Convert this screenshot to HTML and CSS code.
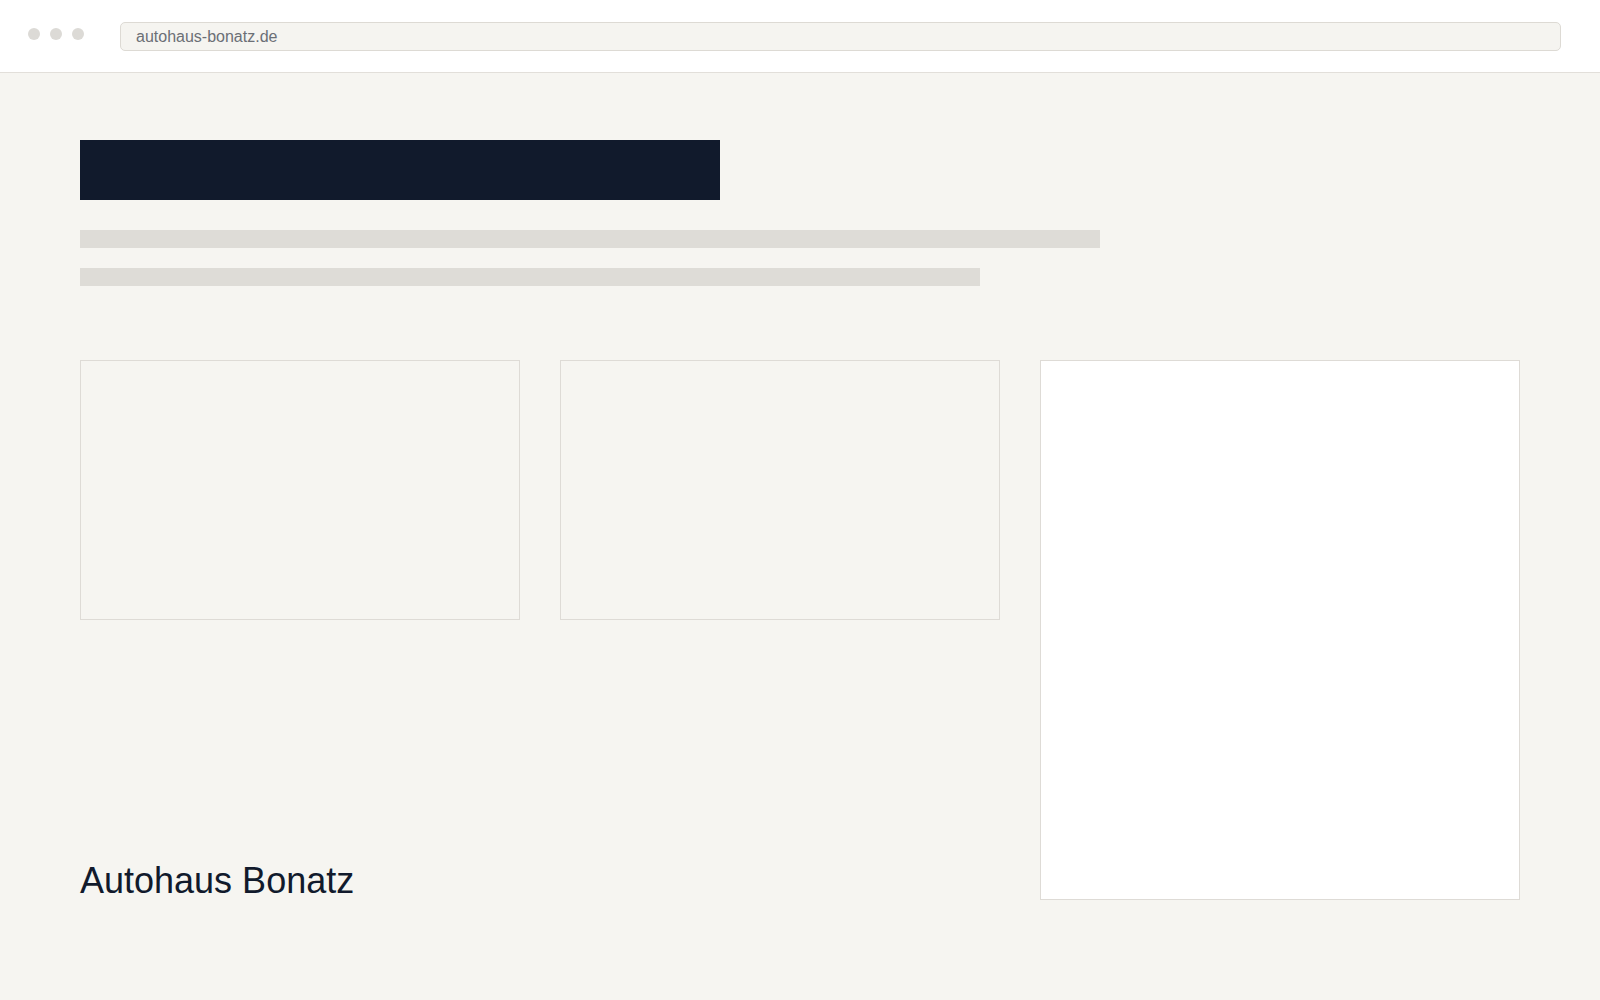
FILE: index.html
```html
<!DOCTYPE html>
<html lang="de">
<head>
<meta charset="utf-8">
<title>Autohaus Bonatz</title>
<link rel="stylesheet" href="styles.css">
</head>
<body>
<header class="browser-bar">
  <div class="dots">
    <span class="dot"></span>
    <span class="dot"></span>
    <span class="dot"></span>
  </div>
  <div class="url-bar">autohaus-bonatz.de</div>
</header>
<main class="page">
  <div class="hero-block"></div>
  <div class="line line-1"></div>
  <div class="line line-2"></div>
  <section class="grid">
    <div class="card card-a"></div>
    <div class="card card-b"></div>
    <div class="card card-tall"></div>
    <h1 class="brand">Autohaus Bonatz</h1>
  </section>
</main>
</body>
</html>
```

FILE: styles.css
```css
* { box-sizing: border-box; }
html, body { margin: 0; padding: 0; }
body {
  background: #f6f5f1;
  font-family: "Liberation Sans", Arial, sans-serif;
  width: 1600px;
  height: 1000px;
  overflow: hidden;
}
.browser-bar {
  height: 73px;
  background: #ffffff;
  border-bottom: 1px solid #e2dfda;
  display: flex;
  align-items: flex-start;
  padding: 22px 39px 0 28px;
}
.dots {
  display: flex;
  gap: 10px;
  padding-top: 6px;
  width: 92px;
}
.dot {
  width: 12px;
  height: 12px;
  border-radius: 50%;
  background: #dcdad6;
}
.url-bar {
  flex: 1;
  height: 29px;
  background: #f5f4f0;
  border: 1px solid #dddad4;
  border-radius: 5px;
  padding: 0 15px;
  font-size: 16px;
  line-height: 27px;
  color: #6b6f76;
}
.page {
  padding: 67px 80px 0 80px;
}
.hero-block {
  width: 640px;
  height: 60px;
  background: #111a2c;
}
.line {
  height: 18px;
  background: #dedcd7;
}
.line-1 { width: 1020px; margin-top: 30px; }
.line-2 { width: 900px; margin-top: 20px; }
.grid {
  margin-top: 74px;
  display: grid;
  grid-template-columns: 440px 440px 480px;
  grid-template-rows: 260px 240px;
  column-gap: 40px;
  row-gap: 40px;
}
.card {
  border: 1px solid #dedbd6;
}
.card-a, .card-b { background: transparent; }
.card-tall {
  grid-column: 3;
  grid-row: 1 / span 2;
  background: #ffffff;
}
.brand {
  grid-column: 1 / span 2;
  grid-row: 2;
  align-self: end;
  margin: 0 0 -1px 0;
  font-size: 36px;
  font-weight: 400;
  line-height: 41px;
  color: #111a2c;
}
```
